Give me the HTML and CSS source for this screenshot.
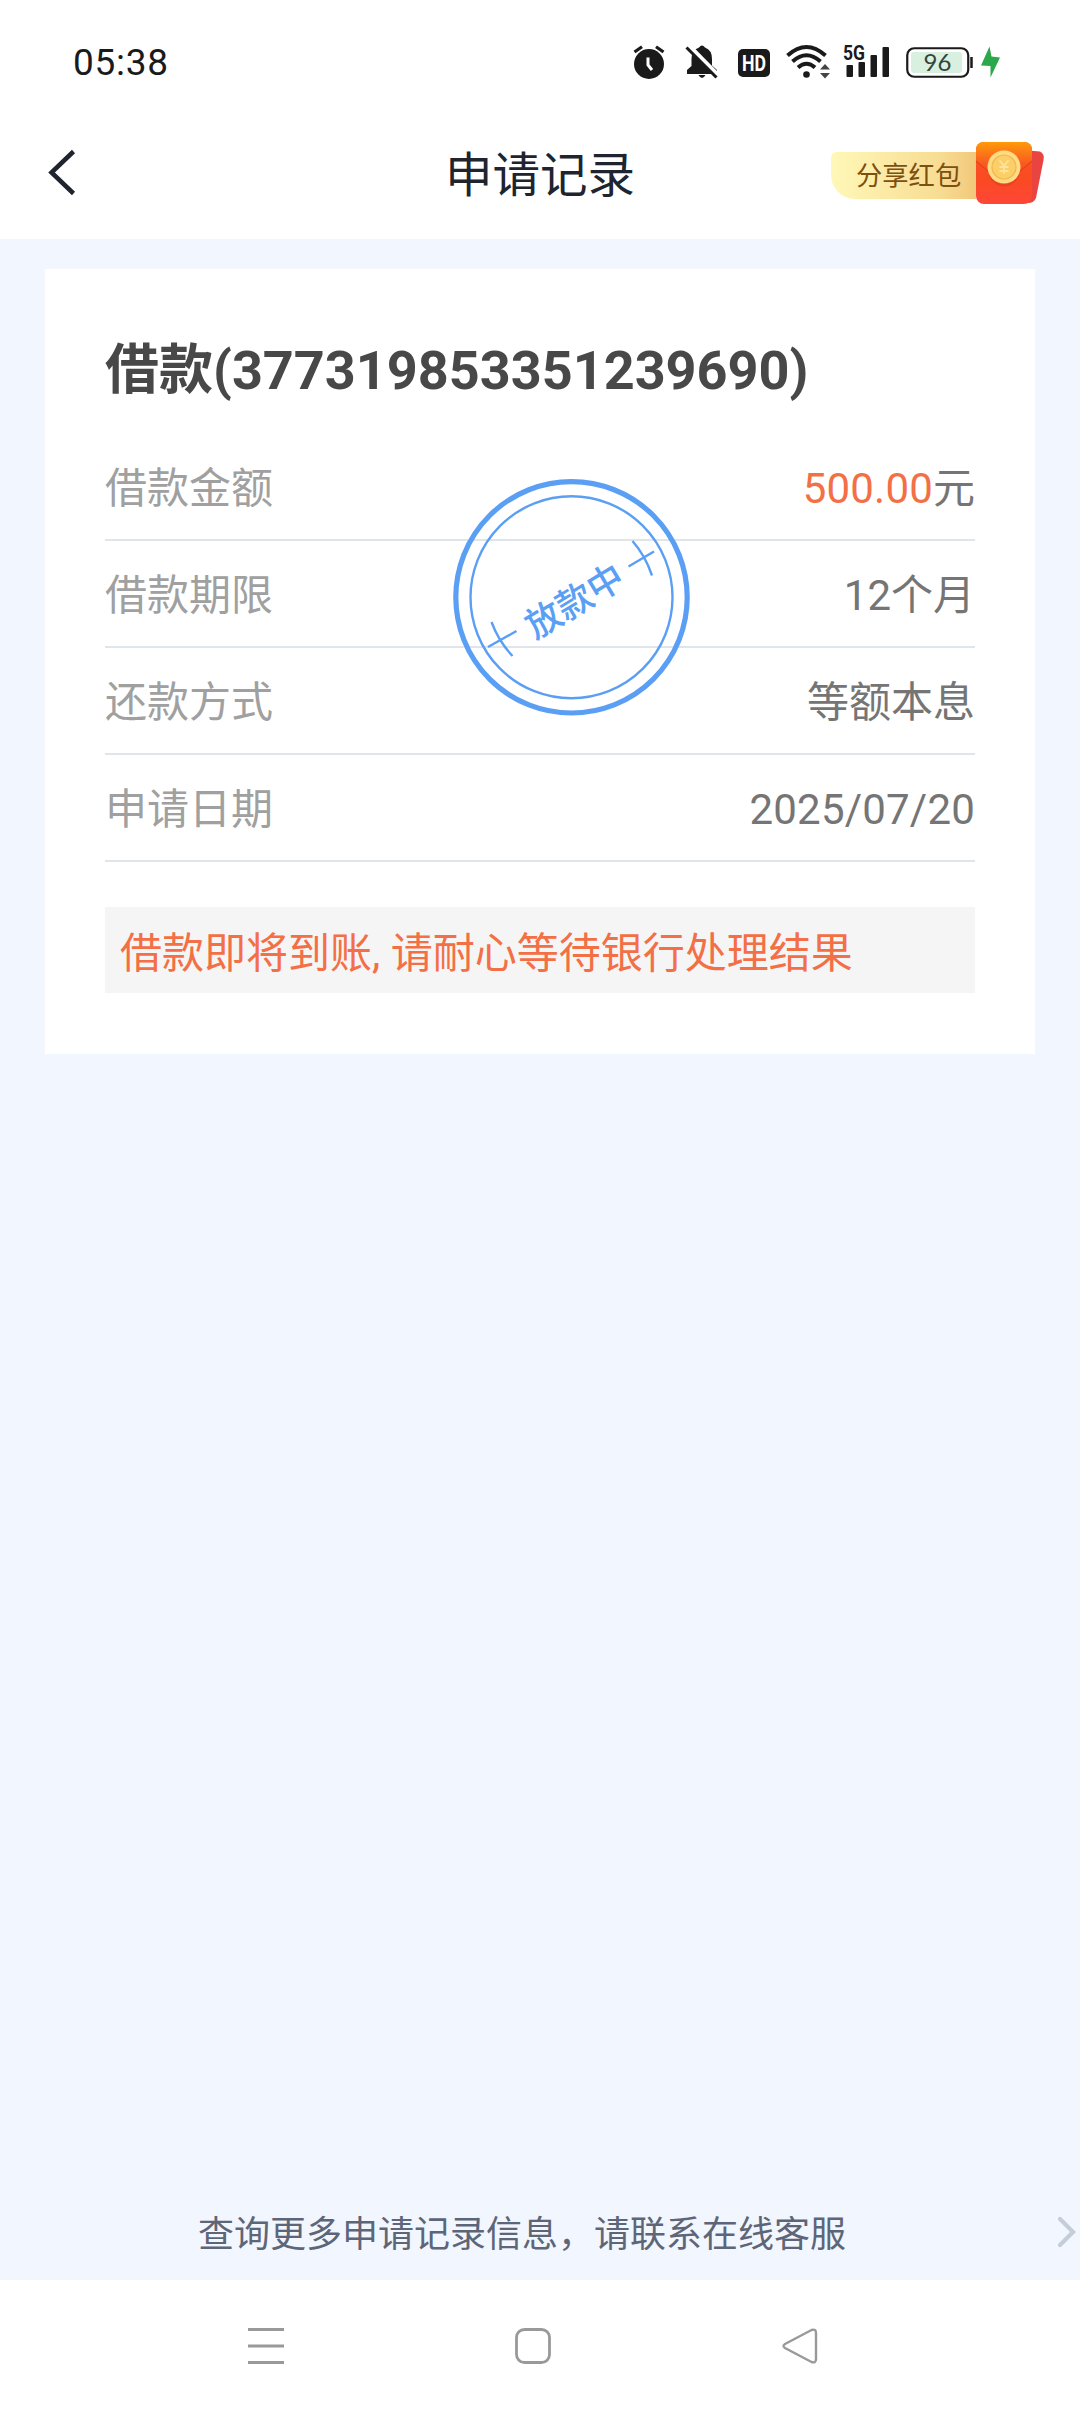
FILE: index.html
```html
<!DOCTYPE html>
<html lang="zh-CN">
<head>
<meta charset="utf-8">
<title>申请记录</title>
<link rel="stylesheet" href="styles.css">
</head>
<body>
<div class="screen">
  <div class="status-bar">
    <span class="clock">05:38</span>
    <div class="status-icons">
      <svg class="ico-alarm" width="34" height="40" viewBox="0 0 34 40">
        <circle cx="17" cy="22" r="15" fill="#1a1a1a"/>
        <path d="M2.500 10 10 4.800M31.500 10 24 4.800" stroke="#1a1a1a" stroke-width="3.200"/>
        <path d="M16 15.500V23l4 5" fill="none" stroke="#fff" stroke-width="3"/>
      </svg>
      <svg class="ico-bell" width="34" height="40" viewBox="0 0 34 40">
        <path d="M14 5.500Q17 1.500 20 5.500Q27 8 27 17V23.500L32 28V32H2V28L6.500 24V17Q6.500 8 14 5.500Z" fill="#1a1a1a"/>
        <path d="M13.500 33h7q-3.500 6-7 0Z" fill="#1a1a1a"/>
        <path d="M3 2.500 34 34" stroke="#fff" stroke-width="4"/>
        <path d="M1.500 5.500 31.500 35.500" stroke="#1a1a1a" stroke-width="3"/>
      </svg>
      <svg class="ico-hd" width="32" height="40" viewBox="0 0 32 40">
        <rect y="7" width="32" height="28" rx="5" fill="#1a1a1a"/>
        <text x="16" y="29" text-anchor="middle" textLength="24" lengthAdjust="spacingAndGlyphs" class="hd-text">HD</text>
      </svg>
      <svg class="ico-wifi" width="44" height="40" viewBox="0 0 44 40">
        <g fill="none" stroke="#1a1a1a" stroke-width="4">
          <path d="M1.500 13.500Q20.500-3.500 39.500 13.500"/>
          <path d="M6.500 19.500Q20.500 7 34.500 19.500"/>
          <path d="M12 25.500Q20.500 18 29 25.500"/>
        </g>
        <circle cx="20.500" cy="32.500" r="3.300" fill="#1a1a1a"/>
        <path d="M34 27.500 39 22l5 5.500ZM34 31h10l-5 5.500Z" fill="#444"/>
      </svg>
      <svg class="ico-signal" width="48" height="40" viewBox="0 0 48 40">
        <text x="0" y="18.300" textLength="22" lengthAdjust="spacingAndGlyphs" class="net-text">5G</text>
        <g fill="#1a1a1a">
          <rect x="3.500" y="23" width="6.500" height="12" rx="1"/>
          <rect x="15.500" y="20" width="6.500" height="15" rx="1"/>
          <rect x="27.500" y="13" width="6.500" height="22" rx="1"/>
          <rect x="39.500" y="5" width="6.500" height="30" rx="1"/>
        </g>
      </svg>
      <svg class="ico-battery" width="68" height="40" viewBox="0 0 68 40">
        <rect x="1.250" y="6.250" width="61" height="28.500" rx="7" fill="#fff" stroke="#1a1a1a" stroke-width="2.200"/>
        <rect x="5" y="10" width="51" height="21" rx="3" fill="#d9efdf"/>
        <path d="M65.500 15v11" stroke="#1a1a1a" stroke-width="2.500"/>
        <text x="31.500" y="29" text-anchor="middle" class="battery-text">96</text>
      </svg>
      <svg class="ico-bolt" width="20" height="40" viewBox="0 0 20 40">
        <path d="M8.500 4.500 0 23.500 9.500 24 9.500 35.500 19 15.500 10.500 14.500Z" fill="#2ba84a"/>
      </svg>
    </div>
  </div>

  <header class="app-bar">
    <svg class="back" width="30" height="48" viewBox="0 0 30 48">
      <path d="M25.500 1.500 3.500 22.500 25.500 43.500" fill="none" stroke="#20242e" stroke-width="4.500"/>
    </svg>
    <h1 class="page-title">申请记录</h1>
    <div class="share">
      <span class="share-label">分享红包</span>
      <svg class="envelope" width="72" height="66" viewBox="0 0 72 66">
        <defs>
          <linearGradient id="env" x1="0" y1="0" x2="0" y2="1">
            <stop offset="0" stop-color="#fb5a24"/>
            <stop offset="0.600" stop-color="#fa4a22"/>
            <stop offset="1" stop-color="#ff4638"/>
          </linearGradient>
          <linearGradient id="flap" x1="0" y1="0" x2="0" y2="1">
            <stop offset="0" stop-color="#ff9a08"/>
            <stop offset="0.200" stop-color="#fd8412"/>
            <stop offset="0.600" stop-color="#f95a20"/>
            <stop offset="1" stop-color="#f64e20"/>
          </linearGradient>
        </defs>
        <path d="M52 9.500 64 10.500Q69 13 67.500 19L60 57Q58 62 52 62Z" fill="#ea4440"/>
        <rect x="0" y="1" width="56" height="62" rx="8" fill="url(#env)"/>
        <path d="M0 20V9Q0 1 8 1H48Q56 1 56 9V20L42 32Q28 42 14 32Z" fill="url(#flap)"/>
        <path d="M0 20 14 32M56 20 42 32" stroke="#df3d1c" stroke-width="1.200" opacity="0.700"/>
        <circle cx="28" cy="29.500" r="16" fill="#d83a1c" opacity="0.400"/>
        <circle cx="28" cy="26" r="16.500" fill="#ffdc84"/>
        <circle cx="28" cy="26" r="12" fill="#fcce68" stroke="#f0b750" stroke-width="1.200"/>
        <path d="M23.500 19 28 25 32.500 19M28 25V33M23.500 26H32.500M23.500 30H32.500" fill="none" stroke="#ffe398" stroke-width="1.800"/>
      </svg>
    </div>
  </header>

  <main class="content">
    <section class="card">
      <h2 class="loan-title">借款(377319853351239690)</h2>
      <div class="row"><span class="label">借款金额</span><span class="value"><span class="amount">500.00</span>元</span></div>
      <div class="row"><span class="label">借款期限</span><span class="value">12个月</span></div>
      <div class="row"><span class="label">还款方式</span><span class="value">等额本息</span></div>
      <div class="row"><span class="label">申请日期</span><span class="value date">2025/07/20</span></div>
      <p class="notice">借款即将到账, 请耐心等待银行处理结果</p>
      <svg class="stamp" width="240" height="240" viewBox="0 0 240 240">
        <g fill="none" stroke="#5b9ff5">
          <circle cx="120.500" cy="120.300" r="115.700" stroke-width="5.200"/>
          <circle cx="120.500" cy="120.300" r="101" stroke-width="2.400"/>
          <path d="M40.500 145Q47.500 164 61.500 179M37 170 65.500 154M181.500 64Q194.500 79 201 98.500M177.500 89.500 203 74.500" stroke-width="2.400"/>
        </g>
        <text transform="translate(123.500 124) rotate(-31)" x="0" y="13" text-anchor="middle" class="stamp-text">放款中</text>
      </svg>
    </section>
    <a class="support">
      <span class="support-text">查询更多申请记录信息，请联系在线客服</span>
      <svg class="support-arrow" width="20" height="34" viewBox="0 0 20 34">
        <path d="M3 4 16 17 3 30" fill="none" stroke="#c5ccda" stroke-width="4.200" stroke-linecap="round"/>
      </svg>
    </a>
  </main>

  <nav class="system-nav">
    <svg width="36" height="36" viewBox="0 0 36 36"><path d="M0 1.500H36M0 18H36M0 34.500H36" stroke="#999" stroke-width="3"/></svg>
    <svg width="36" height="36" viewBox="0 0 36 36"><rect x="1.500" y="1.500" width="33" height="33" rx="8" fill="none" stroke="#999" stroke-width="2.800"/></svg>
    <svg width="36" height="36" viewBox="0 0 36 36"><path d="M3 16 29.500 2Q34 0.500 34 5V31Q34 35.500 29.500 34L3 20Q0 18 3 16Z" fill="none" stroke="#999" stroke-width="2.400"/></svg>
  </nav>
</div>
</body>
</html>
```
FILE: styles.css
```css
* {
  box-sizing: border-box;
}

body {
  margin: 0;
  font-family: Roboto, "Noto Sans CJK SC", sans-serif;
  background: #fff;
}

svg {
  display: block;
  flex: none;
  overflow: visible;
}

.screen {
  display: flex;
  flex-direction: column;
  width: 1080px;
  height: 2412px;
  overflow: hidden;
}

.status-bar {
  display: flex;
  justify-content: space-between;
  align-items: center;
  height: 109px;
  padding: 15px 79px 0 73px;
}

.clock {
  padding-top: 2px;
  font-size: 37px;
  line-height: 40px;
  color: #1a1a1a;
  letter-spacing: 0.7px;
}

.status-icons {
  display: flex;
}

.ico-bell { margin-left: 19px; }
.ico-hd { margin-left: 19px; }
.ico-wifi { margin-left: 16px; }
.ico-signal { margin-left: 13px; }
.ico-battery { margin-left: 15px; }
.ico-bolt { margin-left: 7px; }

.hd-text {
  font-size: 22px;
  font-weight: 700;
  fill: #fff;
}

.net-text {
  font-size: 21px;
  font-weight: 700;
  fill: #1a1a1a;
}

.battery-text {
  font-family: Lato, sans-serif;
  font-size: 24px;
  fill: #34453a;
}

.app-bar {
  display: grid;
  grid-template-columns: 1fr auto 1fr;
  align-items: center;
  height: 130px;
  padding: 0 32px 0 48px;
}

.page-title {
  margin: 3px 0 0 -2px;
  font-size: 47.500px;
  line-height: 60px;
  font-weight: 400;
  color: #20242e;
  transform: translateX(-7px);
}

.share {
  display: flex;
  align-items: center;
  justify-self: end;
}

.share-label {
  width: 145px;
  height: 47px;
  margin-top: 2px;
  padding-left: 25px;
  font-size: 26.300px;
  line-height: 49px;
  color: #7d500f;
  white-space: nowrap;
  background: linear-gradient(90deg, #fff8b8, #f8dc93 75%, #f2c87c);
  border-radius: 6px 0 0 24px;
}

.content {
  display: flex;
  flex-direction: column;
  justify-content: space-between;
  height: 2041px;
  padding: 30px 45px 0;
  background: #f2f6fe;
}

.card {
  position: relative;
  height: 785px;
  padding: 60px;
  background: #fff;
}

.loan-title {
  height: 105px;
  margin: 0;
  font-size: 54px;
  line-height: 83px;
  font-weight: 700;
  color: #484848;
}

.row {
  display: flex;
  justify-content: space-between;
  height: 107px;
  border-bottom: 2px solid #dfe5ea;
  font-size: 42px;
  line-height: 110px;
  color: #757575;
}

.label {
  color: #a0a0a0;
}

.amount {
  color: #f36f45;
  letter-spacing: 0.200px;
}

.date {
  letter-spacing: 0.200px;
}

.notice {
  height: 86px;
  margin: 45px 0 0;
  padding-left: 15px;
  font-size: 42px;
  line-height: 93px;
  white-space: nowrap;
  color: #f36f45;
  background: #f5f5f5;
}

.stamp {
  position: absolute;
  left: 406px;
  top: 208px;
}

.stamp-text {
  font-size: 36px;
  font-weight: 500;
  fill: #5b9ff5;
}

.support {
  display: flex;
  justify-content: space-between;
  align-items: center;
  height: 96px;
  margin: 0 -42px 0 153px;
}

.support-text {
  padding-top: 5px;
  font-size: 36px;
  line-height: 52px;
  white-space: nowrap;
  color: #5d6678;
}

.system-nav {
  display: flex;
  justify-content: space-between;
  align-items: center;
  height: 132px;
  padding: 0 262px 0 248px;
}
```
